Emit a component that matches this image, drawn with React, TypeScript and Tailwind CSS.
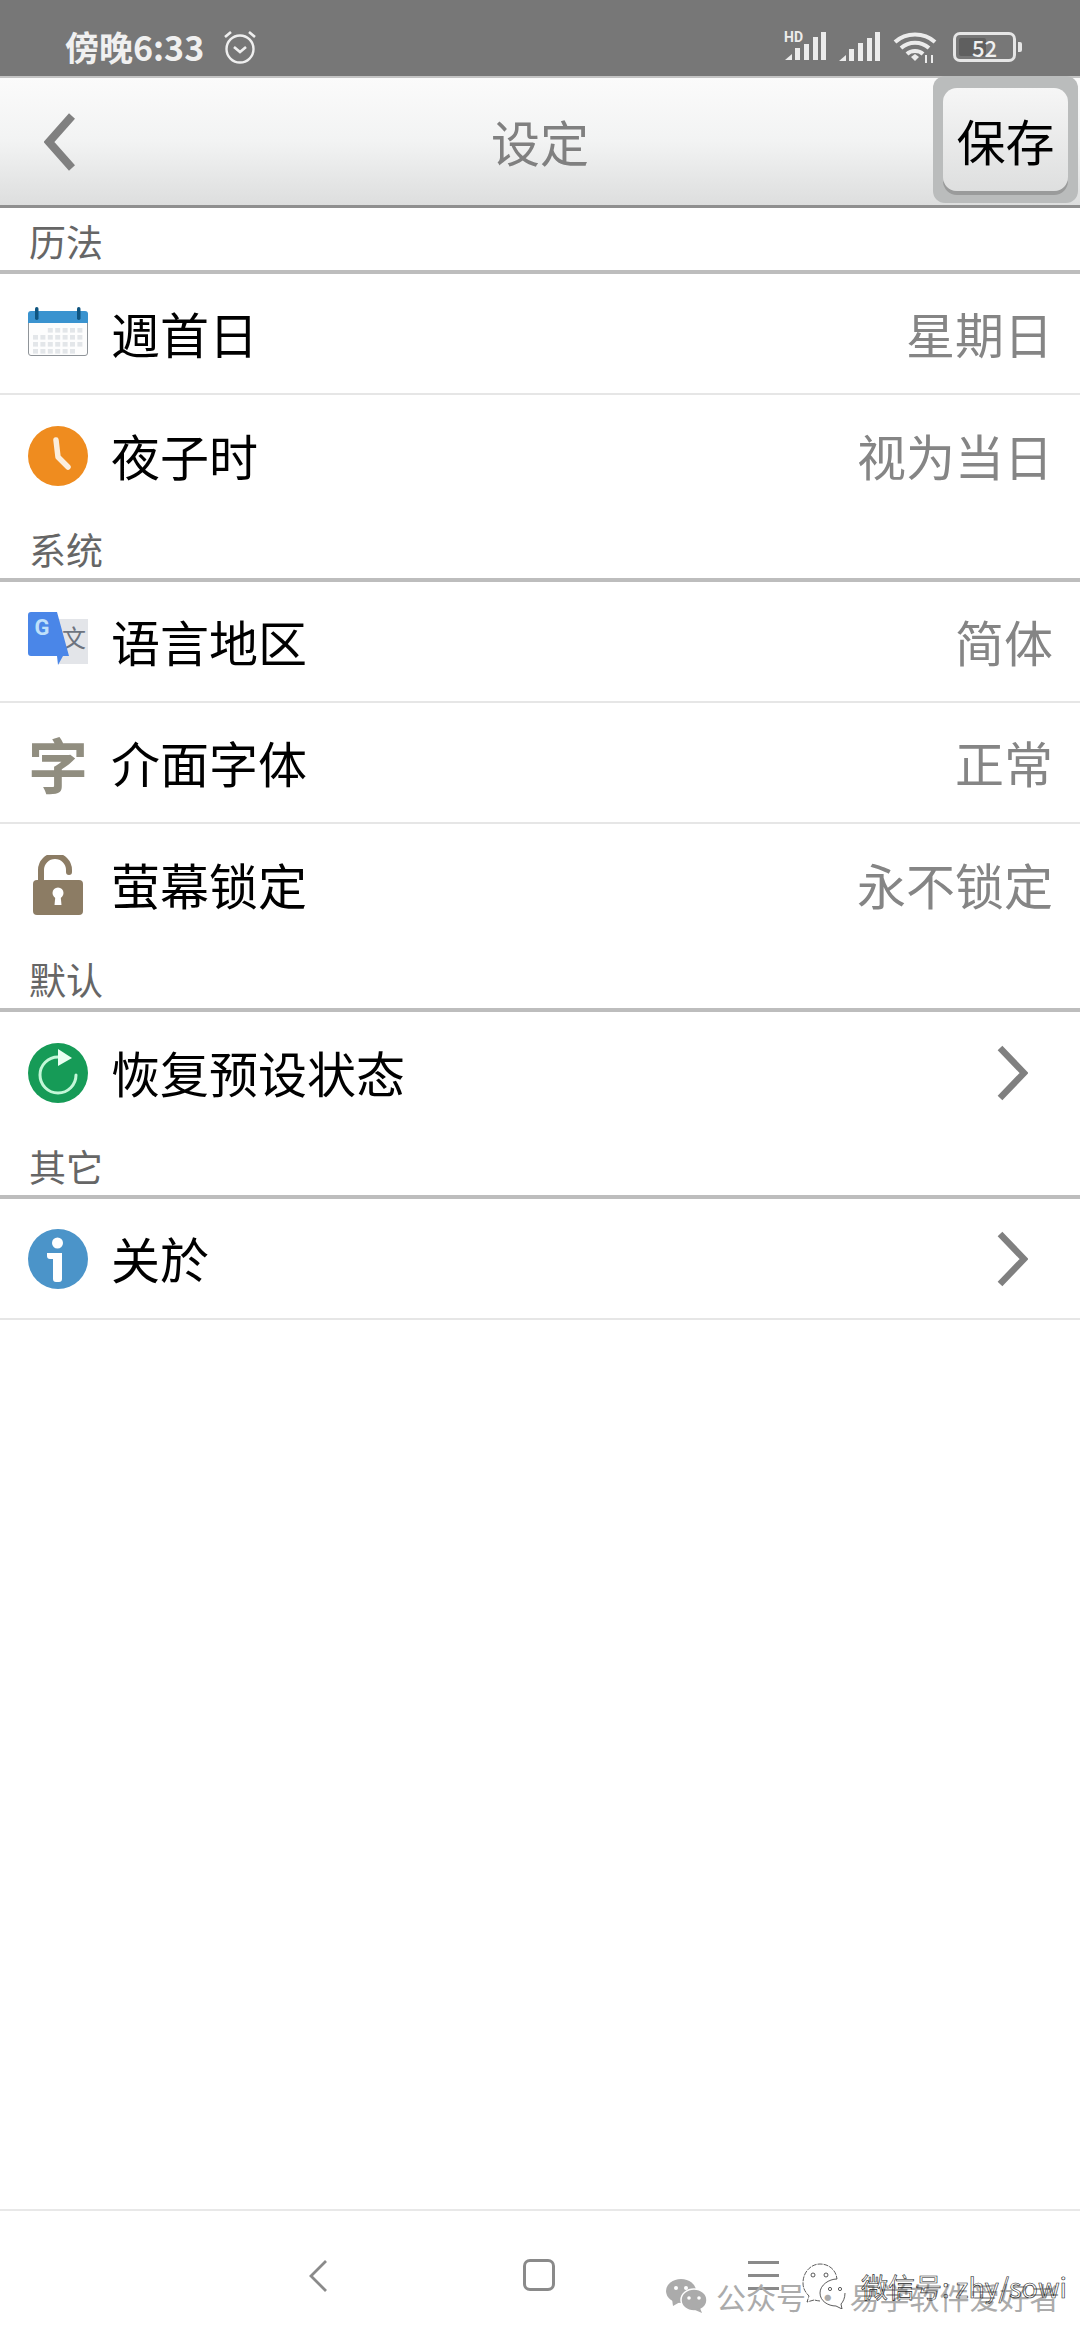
import React from "react";

const FONT = "font-['Noto_Sans_CJK_SC','Noto_Sans',sans-serif]";

function CalendarIcon() {
    const cells: React.ReactNode[] = [];
    for (let r = 0; r < 4; r++) {
        for (let c = 0; c < 7; c++) {
            if ((r === 0 && c < 2) || (r === 3 && c > 5)) continue;
            cells.push(<rect key={`${r}-${c}`} x={5 + c * 7.4} y={24 + r * 7} width="5" height="4.6" fill="#e3e6e9" />);
        }
    }
    return (
        <svg width="60" height="60" viewBox="0 0 60 60">
            <rect x="0.5" y="8.5" width="59" height="43" rx="2.5" fill="#fdfdfd" stroke="#8f9499" />
            <path d="M0 19V10a3 3 0 0 1 3-3h54a3 3 0 0 1 3 3v9z" fill="#3a93cf" />
            <rect x="7" y="3" width="3.5" height="13" rx="1.7" fill="#0f5580" />
            <rect x="49" y="3" width="3.5" height="13" rx="1.7" fill="#0f5580" />
            {cells}
        </svg>
    );
}

function ClockIcon() {
    return (
        <svg width="60" height="60" viewBox="0 0 60 60">
            <circle cx="30" cy="30" r="30" fill="#ef8c1f" />
            <path d="M28 14l2 17 10 10" fill="none" stroke="#fbeedd" strokeWidth="5.5" strokeLinecap="round" strokeLinejoin="round" />
        </svg>
    );
}

function TranslateIcon() {
    return (
        <svg width="60" height="60" viewBox="0 0 60 60">
            <path d="M30 7h30v45H30z" fill="#e3e5e9" />
            <text x="46" y="35" textAnchor="middle" fontSize="24" fill="#6d7480" fontFamily="Noto Sans CJK SC">文</text>
            <path d="M3 0h26l12 44h-6l-5 9-1-9H3a3 3 0 0 1-3-3V3a3 3 0 0 1 3-3z" fill="#4a86e8" />
            <text x="14" y="23" textAnchor="middle" fontSize="22" fontWeight="700" fill="#bfe0fa" fontFamily="Roboto">G</text>
        </svg>
    );
}

function LockIcon() {
    return (
        <svg width="60" height="60" viewBox="0 0 60 60">
            <path d="M13 26V15a14 14 0 0 1 28 0v2" fill="none" stroke="#8c7c64" strokeWidth="6" strokeLinecap="round" />
            <rect x="5" y="25" width="50" height="35" rx="4" fill="#8c7c64" />
            <circle cx="30" cy="38" r="5.5" fill="#fff" />
            <path d="M27.5 40h5l1 10h-7z" fill="#fff" />
        </svg>
    );
}

function ResetIcon() {
    return (
        <svg width="60" height="60" viewBox="0 0 60 60">
            <circle cx="30" cy="30" r="30" fill="#169b57" />
            <path d="M30 14a18 18 0 1 0 18 18" fill="none" stroke="#c4f7d8" strokeWidth="3" strokeLinecap="round" />
            <path d="M30 6l14 9-14 8z" fill="#eafff2" />
        </svg>
    );
}

function InfoIcon() {
    return (
        <svg width="60" height="60" viewBox="0 0 60 60">
            <circle cx="30" cy="30" r="30" fill="#4b94c9" />
            <circle cx="29.5" cy="14" r="5.5" fill="#fff" />
            <path d="M19 24h15v26a3 3 0 0 1-3 3h-3a3 3 0 0 1-3-3V30h-3a3 3 0 0 1-3-3z" fill="#fff" />
        </svg>
    );
}

function FontIcon() {
    return (
        <div className="w-[60px] h-[60px] flex items-center justify-center text-[60px] leading-[60px] font-bold text-[#918e80]">
            字
        </div>
    );
}

function Chevron() {
    return (
        <svg width="32" height="56" viewBox="0 0 32 56">
            <path d="M4 3l24 25L4 53" fill="none" stroke="#808080" strokeWidth="6.5" />
        </svg>
    );
}

function SectionLabel({ title, extra }: { title: string; extra?: boolean }) {
    return (
        <div className={`${extra ? "h-[67px]" : "h-[66px]"} pl-[29px] flex items-end pb-[3px] border-b-4 border-[#bdbdbd] text-[37px] leading-[52px] text-[#666666]`}>
            {title}
        </div>
    );
}

function Row({ icon, title, value, arrow, line }: { icon: React.ReactNode; title: string; value?: string; arrow?: boolean; line?: boolean }) {
    return (
        <div className={`h-[121px] pl-[28px] flex items-center gap-[23px] ${line ? "border-b-2 border-[#e6e6e6]" : ""} ${arrow ? "pr-[52px]" : "pr-[27px]"}`}>
            {icon}
            <span className="flex-1 text-[49px] leading-none mt-[-3px] text-black">{title}</span>
            {value && <span className="text-[49px] leading-none mt-[-3px] text-[#858585]">{value}</span>}
            {arrow && <Chevron />}
        </div>
    );
}

function StatusBar() {
    return (
        <div className="h-[76px] bg-[#777777] flex items-center justify-between pt-[17px] pl-[65px] pr-[58px] text-[#f0f0f0]">
            <div className="flex items-center gap-[19px]">
                <span className="text-[34px] font-bold leading-none">傍晚6:33</span>
                <svg width="34" height="36" viewBox="0 0 34 36" fill="none" stroke="#efefef" strokeWidth="2.4">
                    <circle cx="17" cy="20" r="13.5" />
                    <path d="M11 18l6 5 6-5" strokeWidth="2.6" />
                    <path d="M2 8l6-5M32 8l-6-5" strokeWidth="2.6" />
                </svg>
            </div>
            <div className="flex items-center gap-[13px]">
                <svg className="mr-[-3px]" width="44" height="32" viewBox="0 0 44 32" fill="#ececec">
                    <text x="0" y="11" fontSize="14" fontWeight="700" fontFamily="Roboto">HD</text>
                    <path d="M1 29l7-6v6z" />
                    <rect x="11" y="17" width="5" height="12" />
                    <rect x="20" y="13" width="5" height="16" />
                    <rect x="29" y="6" width="5" height="23" />
                    <rect x="37" y="1" width="5" height="28" />
                </svg>
                <svg width="42" height="30" viewBox="0 0 42 30" fill="#ececec">
                    <path d="M1 29l7-6v6z" />
                    <rect x="11" y="17" width="5" height="12" />
                    <rect x="20" y="11" width="5" height="18" />
                    <rect x="29" y="6" width="5" height="23" />
                    <rect x="37" y="0" width="5" height="29" />
                </svg>
                <svg width="44" height="34" viewBox="0 0 44 34" fill="none" stroke="#ececec" strokeWidth="4">
                    <path d="M2 12c11-10 29-10 40 0" />
                    <path d="M8 18c8-7 20-7 28 0" />
                    <path d="M14 24c4-4 12-4 16 0" />
                    <path d="M18 27l4-3 4 3-4 4z" fill="#ececec" stroke="none" />
                    <path d="M33 25v8M39 25v8" strokeWidth="2" />
                </svg>
                <div className="flex items-center gap-[2px] ml-[3px]">
                    <div className="w-[63px] h-[30px] rounded-[7px] border-[3px] border-[#e6e6e6] p-[3px] flex relative">
                        <div className="w-[52%] h-full bg-[#5f5f5f] rounded-[2px]" />
                        <span className="absolute inset-0 flex items-center justify-center text-[22px] leading-none font-medium text-[#f0f0f0]">52</span>
                    </div>
                    <div className="w-[4px] h-[10px] bg-[#e6e6e6] rounded-r-[2px]" />
                </div>
            </div>
        </div>
    );
}

function TitleBar() {
    return (
        <div className="h-[132px] grid grid-cols-[1fr_auto_1fr] items-center border-t-2 border-[#c4c4c4] border-b-[3px] border-b-[#8f8f8f] bg-gradient-to-b from-[#fbfbfb] via-[#f2f3f3] to-[#dddede]">
            <div className="pl-[44px] flex items-center">
                <svg width="32" height="58" viewBox="0 0 32 58">
                    <path d="M28 3L5 29l23 26" fill="none" stroke="#808080" strokeWidth="8" />
                </svg>
            </div>
            <span className="text-[49px] leading-none mt-[-3px] text-[#808080]">设定</span>
            <div className="flex justify-end pr-[2px] self-start">
                <div className="w-[145px] h-[127px] mt-[-2px] rounded-[12px] bg-[#babcbc] px-[10px] pt-[12px]">
                    <div className="h-[103px] rounded-[14px] bg-gradient-to-b from-[#f6f6f6] to-[#dedfdf] shadow-[0_4px_0_#9a9b9b] flex items-center justify-center text-[49px] leading-none text-black">
                        保存
                    </div>
                </div>
            </div>
        </div>
    );
}

function NavBar() {
    return (
        <div className="relative flex-1 border-t-2 border-[#e8e8e8] bg-white flex items-start pt-[48px] pl-[308px]">
            <svg width="20" height="34" viewBox="0 0 20 34">
                <path d="M18 2L3 17l15 15" fill="none" stroke="#8a8a8a" strokeWidth="2.8" />
            </svg>
            <div className="ml-[195px] w-[32px] h-[32px] rounded-[7px] border-[3px] border-[#8a8a8a]" />
            <div className="ml-[193px] w-[31px] flex flex-col gap-[10px] mt-[2px]">
                <div className="h-[3px] bg-[#8a8a8a]" />
                <div className="h-[3px] bg-[#8a8a8a]" />
                <div className="h-[3px] bg-[#8a8a8a]" />
            </div>
            {/* watermark over the nav bar */}
            <div className="absolute left-[666px] top-[68px] flex items-center gap-[9px] text-[30px] leading-none text-[#ababab]">
                <svg width="41" height="34" viewBox="0 0 41 34" fill="#ababab">
                    <ellipse cx="15" cy="12" rx="15" ry="12" />
                    <path d="M6 20l1 7 7-4z" />
                    <ellipse cx="28" cy="21" rx="13" ry="11" fill="#ababab" stroke="#fff" strokeWidth="1.5" />
                    <path d="M34 29l2 5-7-3z" />
                    <circle cx="10" cy="9" r="2" fill="#fff" />
                    <circle cx="20" cy="9" r="2" fill="#fff" />
                    <circle cx="23" cy="19" r="1.8" fill="#fff" />
                    <circle cx="33" cy="19" r="1.8" fill="#fff" />
                </svg>
                <span>公众号 · 易学软件爱好者</span>
            </div>
            <div className="absolute left-[802px] top-[52px] flex items-center gap-[15px]">
                <svg width="44" height="46" viewBox="0 0 44 46" fill="none" stroke="#333333" strokeWidth="0.8">
                    <path d="M18 38c-2 0-5-1-6-1l-7 2 2-6C3 29 1 25 1 20 1 9 9 1 18 1s16 6 17 15" strokeDasharray="5 1" />
                    <path d="M35 16c-8 0-17 6-17 14s8 13 16 13l6 3-1-5c2-2 4-6 4-11" />
                    <circle cx="11" cy="12" r="2" />
                    <circle cx="24" cy="12" r="2" />
                    <circle cx="28" cy="26" r="1.6" />
                    <circle cx="38" cy="26" r="1.6" />
                </svg>
                <span className="text-[27px] leading-none text-transparent [-webkit-text-stroke:0.6px_#222222]">微信号: zhy/sowi</span>
            </div>
        </div>
    );
}

export default function App() {
    return (
        <div className={`w-[1080px] h-[2340px] bg-white flex flex-col overflow-hidden ${FONT}`}>
            <StatusBar />
            <TitleBar />

            <SectionLabel title="历法" />
            <Row icon={<CalendarIcon />} title="週首日" value="星期日" line />
            <Row icon={<ClockIcon />} title="夜子时" value="视为当日" />

            <SectionLabel title="系统" />
            <Row icon={<TranslateIcon />} title="语言地区" value="简体" line />
            <Row icon={<FontIcon />} title="介面字体" value="正常" line />
            <Row icon={<LockIcon />} title="萤幕锁定" value="永不锁定" />

            <SectionLabel title="默认" extra />
            <Row icon={<ResetIcon />} title="恢复预设状态" arrow />

            <SectionLabel title="其它" />
            <Row icon={<InfoIcon />} title="关於" arrow line />

            <div className="h-[889px] bg-white" />
            <NavBar />
        </div>
    );
}
